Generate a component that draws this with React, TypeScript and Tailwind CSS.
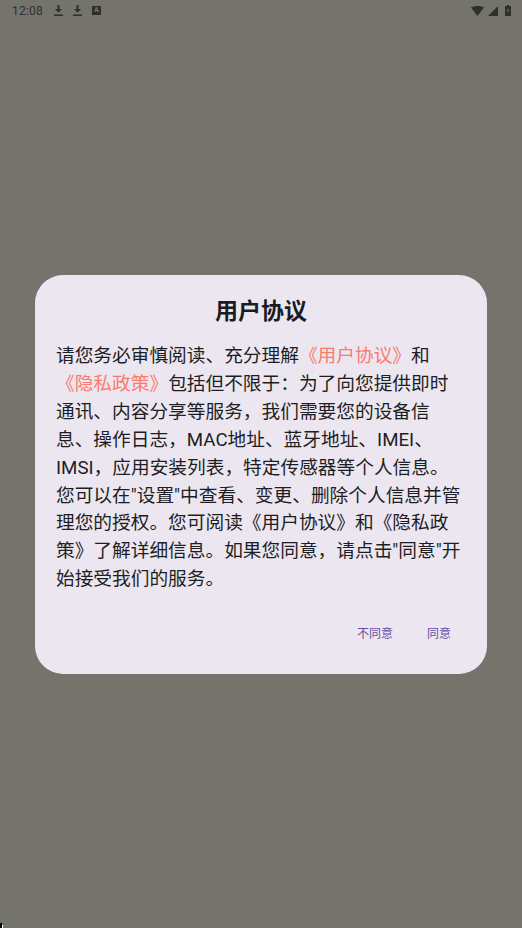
const LINES = [
  ['请您务必审慎阅读、充分理解', '《用户协议》', '和'],
  ['', '《隐私政策》', '包括但不限于：为了向您提供即时'],
  ['通讯、内容分享等服务，我们需要您的设备信'],
  ['息、操作日志，MAC地址、蓝牙地址、IMEI、'],
  ['IMSI，应用安装列表，特定传感器等个人信息。'],
  ['您可以在"设置"中查看、变更、删除个人信息并管'],
  ['理您的授权。您可阅读《用户协议》和《隐私政'],
  ['策》了解详细信息。如果您同意，请点击"同意"开'],
  ['始接受我们的服务。'],
]

function DownloadIcon({ className }: { className: string }) {
  return (
    <svg width="9" height="11" viewBox="0 0 9 11" className={className}>
      <path d="M3.5 0H5.5V4H8L4.5 7.8L1 4H3.5Z" fill="#2f2f2c" />
      <path d="M0 9.5H9V11H0Z" fill="#2f2f2c" />
    </svg>
  )
}

function StatusBar() {
  return (
    <div className="flex items-center h-[21px] pl-3 pr-[11px] text-[#2f2f2c]">
      <span className="text-[12px] leading-none tracking-[0.2px]">12:08</span>
      <DownloadIcon className="ml-[11px]" />
      <DownloadIcon className="ml-[10px]" />
      <span className="ml-[10px] w-[9px] h-[9px] bg-[#2f2f2c] text-[#74746d] text-[7px] font-bold leading-[9px] text-center">A</span>
      <div className="ml-auto flex items-center gap-[4px]">
        <svg width="13" height="10" viewBox="0 0 13 10">
          <path d="M0 1.5C4 -0.5 9 -0.5 13 1.5L6.5 10Z" fill="#2f2f2c" />
        </svg>
        <svg width="10" height="10" viewBox="0 0 10 10">
          <path d="M10 0V10H0Z" fill="#2f2f2c" />
        </svg>
        <svg width="6" height="11" viewBox="0 0 6 11" className="ml-[3px]">
          <path d="M2 0H4V1H6V11H0V1H2Z" fill="#2f2f2c" />
          <path d="M3.4 2.5L1.8 6H3L2.6 8.5L4.2 5H3Z" fill="#74746d" />
        </svg>
      </div>
    </div>
  )
}

export default function App() {
  return (
    <div className="relative flex flex-col w-[522px] h-[928px] overflow-hidden bg-[#74746d] font-['Roboto','Noto_Sans_CJK_SC',sans-serif]">
      <StatusBar />

      <div className="mt-[254px] mx-[35px] h-[399px] rounded-[28px] bg-[#ece6f0] pt-[22px] px-[21px]">
        <h1 className="text-center text-[23px] leading-[30px] font-bold text-[#1a1c22]">用户协议</h1>

        <div className="mt-[16px] text-[18.7px] leading-[27.9px] text-[#1d1e24] whitespace-nowrap">
          {LINES.map((line, i) => (
            <div key={i}>
              {line[0]}
              {line[1] && <span className="text-[#fb7a6c]">{line[1]}</span>}
              {line[2]}
            </div>
          ))}
        </div>

        <div className="flex justify-end gap-[34px] mt-[32px] pr-[15px] text-[12px] leading-[16px] text-[#6750a4]">
          <span>不同意</span>
          <span>同意</span>
        </div>
      </div>

      <div className="absolute left-0 bottom-0 w-[2px] h-[5px] bg-black" />
      <div className="absolute left-[2px] bottom-0 w-[1px] h-[3px] bg-white" />
    </div>
  )
}
